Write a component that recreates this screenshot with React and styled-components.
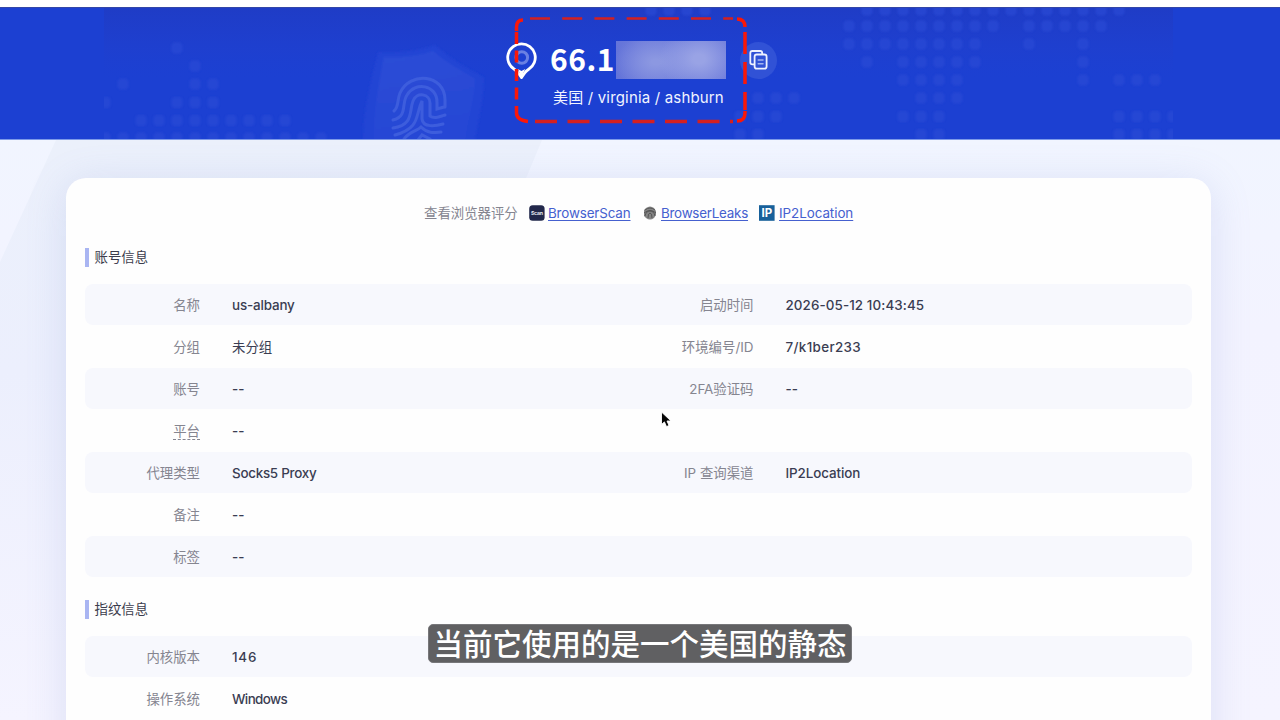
import React from "react";
import styled, { createGlobalStyle } from "styled-components";

const GlobalStyle = createGlobalStyle`
  * { box-sizing: border-box; }
  body {
    margin: 0;
    overflow: hidden;
    background: #f2f4ff;
    font-family: Inter, "Noto Sans CJK SC", sans-serif;
  }
`;

const Page = styled.div`
  position: relative;
  display: flex;
  flex-direction: column;
  width: 1280px;
  height: 720px;
  overflow: hidden;
  padding-top: 7px;
  background: linear-gradient(#fff 7px, #f1f5ff 140px, #f3f3ff 330px, #f5f4ff 720px);
`;

const Backdrop = styled.svg`
  position: absolute;
  inset: 0;
`;

const Hero = styled.header`
  position: relative;
  flex: none;
  display: flex;
  flex-direction: column;
  align-items: center;
  height: 133px;
  padding: 33px 0 0 3px;
  color: #fff;
  background: #1c40d2;
  border-top: 1px solid #3346a8;
  border-bottom: 1px solid #7d9ae8;
`;

const HeroArt = styled.svg`
  position: absolute;
  left: 0;
  top: -1px;
`;

const AddressLine = styled.div`
  position: relative;
  display: flex;
  align-items: center;
  width: 271px;
  height: 38px;
`;

const Address = styled.h1`
  margin: 0 0 0 13px;
  width: 66px;
  font-family: "Noto Sans CJK SC", sans-serif;
  font-size: 30px;
  line-height: 38px;
  padding-bottom: 4px;
  font-weight: 700;
  letter-spacing: 0.5px;
  white-space: nowrap;
`;

const Masked = styled.div`
  width: 110px;
  height: 38px;
  background:
    radial-gradient(ellipse 40px 32px at 83px 18px, #99a3e5 15%, rgba(153, 163, 229, 0) 100%),
    radial-gradient(ellipse 42px 28px at 40px 21px, #8c98e1 10%, rgba(140, 152, 225, 0) 100%),
    linear-gradient(90deg, #6474d9, #6e7cdb 25%, #7280dc 80%, #6e7cdb);
`;

const CopyButton = styled.button`
  display: flex;
  align-items: center;
  justify-content: center;
  width: 37px;
  height: 37px;
  margin: 0 0 0 14px;
  padding: 0;
  border: 0;
  border-radius: 50%;
  background: #3152d6;
`;

const Place = styled.p`
  position: relative;
  margin: 8px 6px 0 0;
  height: 22px;
  font-size: 15px;
  line-height: 22px;
  letter-spacing: 0.17px;
  color: #f1f4ff;
  white-space: nowrap;
`;

const Highlight = styled.svg`
  position: absolute;
  left: 509px;
  top: 12px;
`;

const Card = styled.main`
  position: relative;
  flex: none;
  width: 1145px;
  height: 620px;
  margin: 38px 0 0 66px;
  padding: 24px 19px 0 19px;
  border-radius: 20px 20px 0 0;
  background: #fefefe;
  box-shadow: 0 6px 40px rgba(120, 138, 205, 0.2);
`;

const ScoreBar = styled.nav`
  display: flex;
  align-items: center;
  height: 22px;
  padding-left: 339px;
  font-size: 13.4px;
  color: #858590;
`;

const ScoreLabel = styled.span`
  width: 104.5px;
  margin-top: -2px;
  white-space: nowrap;
`;

const ScoreLink = styled.a`
  display: flex;
  align-items: center;
  flex: none;
  width: ${(p) => p.$width}px;
  color: #4560cf;
  letter-spacing: ${(p) => p.$tracking}px;
  text-decoration: underline;
  text-underline-offset: 2px;
  white-space: nowrap;

  svg { flex: none; margin-right: ${(p) => p.$gap || 3.5}px; }
`;

const SectionTitle = styled.h2`
  display: flex;
  align-items: center;
  gap: 5.5px;
  height: 20px;
  margin: ${(p) => p.$top}px 0 17px;
  font-size: 13.4px;
  line-height: 17px;
  font-weight: 400;
  color: #3b3c4c;

  &::before {
    content: "";
    width: 4px;
    height: 19px;
    background: #a9b5f2;
  }
`;

const Rows = styled.dl`
  display: flex;
  flex-direction: column;
  gap: 1px;
  margin: 0;
`;

const Row = styled.div`
  display: grid;
  grid-template-columns: 1fr 1fr;
  align-items: center;
  height: 41px;
  padding-top: 1px;
  border-radius: 8px;
  background: ${(p) => (p.$shaded ? "#f7f8fd" : "transparent")};
`;

const Field = styled.div`
  display: grid;
  grid-template-columns: 115px 1fr;
  column-gap: 32px;
  align-items: center;
  font-size: 13.4px;
  line-height: 20px;
`;

const Label = styled.dt`
  justify-self: end;
  color: #858590;
  white-space: nowrap;
  text-decoration: ${(p) => (p.$hint ? "underline dashed 1px" : "none")};
  text-underline-offset: 3px;
`;

const Value = styled.dd`
  margin: 0;
  color: #3a3d52;
  font-weight: ${(p) => p.$weight || 500};
  letter-spacing: ${(p) => p.$tracking || 0}px;
  white-space: nowrap;
`;

const Caption = styled.div`
  position: absolute;
  left: 428px;
  top: 624px;
  width: 424px;
  height: 39px;
  border: 1px solid #77777a;
  border-radius: 5px;
  background: #606062;
  color: #fff;
  font: 500 29.5px/34px "Noto Sans CJK SC", sans-serif;
  text-align: center;
  white-space: nowrap;
`;

const Pointer = styled.svg`
  position: absolute;
  left: 660px;
  top: 411px;
`;

const span = (from, count) => Array.from({ length: count }, (_, i) => from + i * 18);

const dots = [
  [10, [...span(651, 4), ...span(867, 15)]],
  [26, [...span(849, 9), ...span(1029, 5)]],
  [44, [...span(849, 8), 1029, 1083]],
  [48, [177]],
  [62, [867, ...span(903, 5), 1083]],
  [66, [195]],
  [80, [...span(903, 4), 1083, ...span(1119, 3)]],
  [84, [123, 195, 213]],
  [98, [...span(758, 3), ...span(921, 3)]],
  [102.5, [105, ...span(177, 3)]],
  [116.5, [...span(740, 3), ...span(903, 3), ...span(1119, 4)]],
  [120.5, span(141, 9)],
  [134.5, [...span(740, 2), ...span(921, 2), ...span(1119, 4)]],
  [138, span(105, 13)],
];

function HeroPattern() {
  return (
    <HeroArt width="1280" height="132" viewBox="0 7 1280 132">
      <defs>
        <linearGradient id="shade" x1="0" y1="0" x2="0" y2="1">
          <stop offset="0" stopColor="#1f3cc6" />
          <stop offset="0.55" stopColor="#1f3fce" stopOpacity="0.7" />
          <stop offset="1" stopColor="#1c40d2" stopOpacity="0" />
        </linearGradient>
        <linearGradient id="shield" x1="0" y1="0" x2="0.2" y2="1">
          <stop offset="0" stopColor="#2e50d7" />
          <stop offset="1" stopColor="#2747d5" />
        </linearGradient>
        <clipPath id="map"><rect x="104" y="8" width="1069" height="131" /></clipPath>
        <filter id="soft"><feGaussianBlur stdDeviation="1.2" /></filter>
        <filter id="faint"><feGaussianBlur stdDeviation="0.5" /></filter>
      </defs>
      <rect x="104" y="8" width="1069" height="75" fill="url(#shade)" />
      <g clipPath="url(#map)">
        <g fill="#2b4cd6" opacity=".65" filter="url(#soft)">
          {dots.map(([y, xs]) => xs.map((x) => (
            <rect key={`${x}-${y}`} x={x - 5.5} y={y - 5.5} width="11" height="11" rx="4" />
          )))}
        </g>
        <g filter="url(#soft)">
          <path d="M378 52C400 53 418 51 435 45C449 57 467 69 484 77C484 95 479 118 475 140H363C363 111 371 80 378 52Z" fill="#2445d4" />
          <path d="M384 57C404 58 420 56 433 51C446 63 461 70 475 79C474 98 467 122 465 140H374C374 110 379 82 384 57Z" fill="url(#shield)" opacity=".8" />
        </g>
        <g fill="none" stroke="#3d5ddd" strokeWidth="3" strokeLinecap="round" filter="url(#faint)">
          <path d="M394 111C399 107 397 100 400 93C410 71 445 74 445 100V107" />
          <path d="M393 120C408 116 401 104 407 95C415 81 437 85 437 102V109L444 107" />
          <path d="M393 128C414 125 409 111 413 101C417 91 430 94 430 103V116C434 119 439 117 445 115" />
          <path d="M395 135C421 128 415 115 422 101V119C423 128 436 126 443 124" />
          <path d="M404 139C409 132 417 131 421 127C429 135 437 132 441 132M418 140L422 135L430 139" />
        </g>
      </g>
    </HeroArt>
  );
}

function PinIcon() {
  return (
    <svg width="31" height="37" viewBox="0 0 31 37" fill="none">
      <path d="M15.5 1.8A13.7 13.7 0 0 1 22.7 27.2C20.2 28.8 19.8 29.2 18.7 31L15.5 35.5L12.3 31C11.2 29.2 10.8 28.8 8.3 27.2A13.7 13.7 0 0 1 15.5 1.8Z" stroke="#fff" strokeWidth="2.8" />
      <path d="M11.8 27L15.5 35L19.2 27L15.5 29Z" fill="#fff" />
      <circle cx="15.8" cy="15.5" r="5.8" stroke="#6a80e3" strokeWidth="3" />
    </svg>
  );
}

function CopyIcon() {
  return (
    <svg width="20" height="20" viewBox="0 0 20 20" fill="none" stroke="#eef1ff" strokeWidth="1.8" strokeLinecap="round" strokeLinejoin="round">
      <path d="M5 14.4H3.3Q1.3 14.4 1.3 12.4V3Q1.3 1 3.3 1H11.2Q13.2 1 13.2 3V4" />
      <rect x="5.6" y="4.5" width="12" height="14.2" rx="2.2" />
      <path d="M9.2 10.1H14M9.2 13.8H14" stroke="#a3b3f0" strokeWidth="1.5" />
    </svg>
  );
}

function ScanIcon() {
  return (
    <svg width="16" height="16" viewBox="0 0 16 16">
      <rect x="0.2" y="0.3" width="15.4" height="15.4" rx="3.5" fill="#22284b" />
      <text x="7.9" y="9.9" fontSize="5.2" fontWeight="700" textAnchor="middle" textLength="12" fill="#e6e8f1">Scan</text>
    </svg>
  );
}

function LeaksIcon() {
  return (
    <svg width="14" height="16" viewBox="0 0 14 16">
      <path d="M3 3Q7 0 11 3L13 6V10L11 13Q7 16 3 13L1 11V5Z" fill="#858585" />
      <g stroke="#505050" fill="none" strokeWidth="0.9">
        <path d="M2 5Q7 1 12 5M1 8Q7 3 13 8M2 11Q3 6 7 6T12 11M5 13Q5 8 7 8T9 13" />
      </g>
    </svg>
  );
}

function LocationIcon() {
  return (
    <svg width="16" height="16" viewBox="0 0 16 16">
      <rect width="15.6" height="15.6" y="0.2" fill="#17609a" />
      <text x="7.8" y="12.2" fontSize="11.5" fontWeight="700" textAnchor="middle" fill="#fff">IP</text>
    </svg>
  );
}

const account = [
  [{ label: "名称", value: "us-albany", tracking: -0.15 }, { label: "启动时间", value: "2026-05-12 10:43:45", tracking: 0.1 }],
  [{ label: "分组", value: "未分组", weight: 400 }, { label: "环境编号/ID", value: "7/k1ber233", tracking: 0.35 }],
  [{ label: "账号", value: "--" }, { label: "2FA验证码", value: "--" }],
  [{ label: "平台", value: "--", hint: true }],
  [{ label: "代理类型", value: "Socks5 Proxy", tracking: -0.26 }, { label: "IP 查询渠道", value: "IP2Location", tracking: -0.08 }],
  [{ label: "备注", value: "--" }],
  [{ label: "标签", value: "--" }],
];

const fingerprint = [
  [{ label: "内核版本", value: "146", tracking: 0.8 }],
  [{ label: "操作系统", value: "Windows", tracking: -0.58 }],
];

function FieldRows({ rows }) {
  return (
    <Rows>
      {rows.map((fields, i) => (
        <Row key={i} $shaded={i % 2 === 0}>
          {fields.map((f) => (
            <Field key={f.label}>
              <Label $hint={f.hint}>{f.label}</Label>
              <Value $tracking={f.tracking} $weight={f.weight}>{f.value}</Value>
            </Field>
          ))}
        </Row>
      ))}
    </Rows>
  );
}

export default function App() {
  return (
    <Page>
      <GlobalStyle />
      <Backdrop width="1280" height="720">
        <defs>
          <linearGradient id="wash" x1="0" y1="0" x2="0" y2="1">
            <stop offset="0" stopColor="#ebf0fb" />
            <stop offset="0.4" stopColor="#eceffd" />
            <stop offset="1" stopColor="#f5f4ff" />
          </linearGradient>
        </defs>
        <path d="M56 140H542L300 720H0V262Z" fill="url(#wash)" />
      </Backdrop>
      <Hero>
        <HeroPattern />
        <AddressLine>
          <PinIcon />
          <Address>66.1</Address>
          <Masked />
          <CopyButton aria-label="复制"><CopyIcon /></CopyButton>
        </AddressLine>
        <Place>美国 / virginia / ashburn</Place>
      </Hero>
      <Card>
        <ScoreBar>
          <ScoreLabel>查看浏览器评分</ScoreLabel>
          <ScoreLink $width={114.5} $tracking={-0.14}><ScanIcon />BrowserScan</ScoreLink>
          <ScoreLink $width={116} $tracking={-0.24} $gap={4}><LeaksIcon />BrowserLeaks</ScoreLink>
          <ScoreLink $width={96} $tracking={-0.05} $gap={4}><LocationIcon />IP2Location</ScoreLink>
        </ScoreBar>
        <SectionTitle $top={23}><span>账号信息</span></SectionTitle>
        <FieldRows rows={account} />
        <SectionTitle $top={22}><span>指纹信息</span></SectionTitle>
        <FieldRows rows={fingerprint} />
      </Card>
      <Highlight width="244" height="118" fill="none" stroke="#fa1708" strokeWidth="3.5">
        <path d="M19 6.5H224" stroke="#d42020" strokeWidth="2.5" strokeDasharray="20 12.2" strokeDashoffset="-2" />
        <path d="M20 109.5H224" stroke="#d42020" strokeDasharray="22 10.5" strokeDashoffset="-6" />
        <path d="M7.5 20V98" strokeDasharray="12 6.5" />
        <path d="M236 20V98" strokeDasharray="22 8" />
        <path d="M7.5 19V15Q7.5 8 14 8M228 7Q236 7 236 15M236 99V101Q236 109 228 109M7.5 98V101Q7.5 108 19 109.5" />
      </Highlight>
      <Pointer width="14" height="18" viewBox="0 0 14 18">
        <path d="M1.5 1V13.5L4.4 10.9L6.5 15.6L9 14.5L7 10H11Z" fill="#050505" stroke="#fff" strokeWidth="0.9" />
      </Pointer>
      <Caption>当前它使用的是一个美国的静态</Caption>
    </Page>
  );
}
